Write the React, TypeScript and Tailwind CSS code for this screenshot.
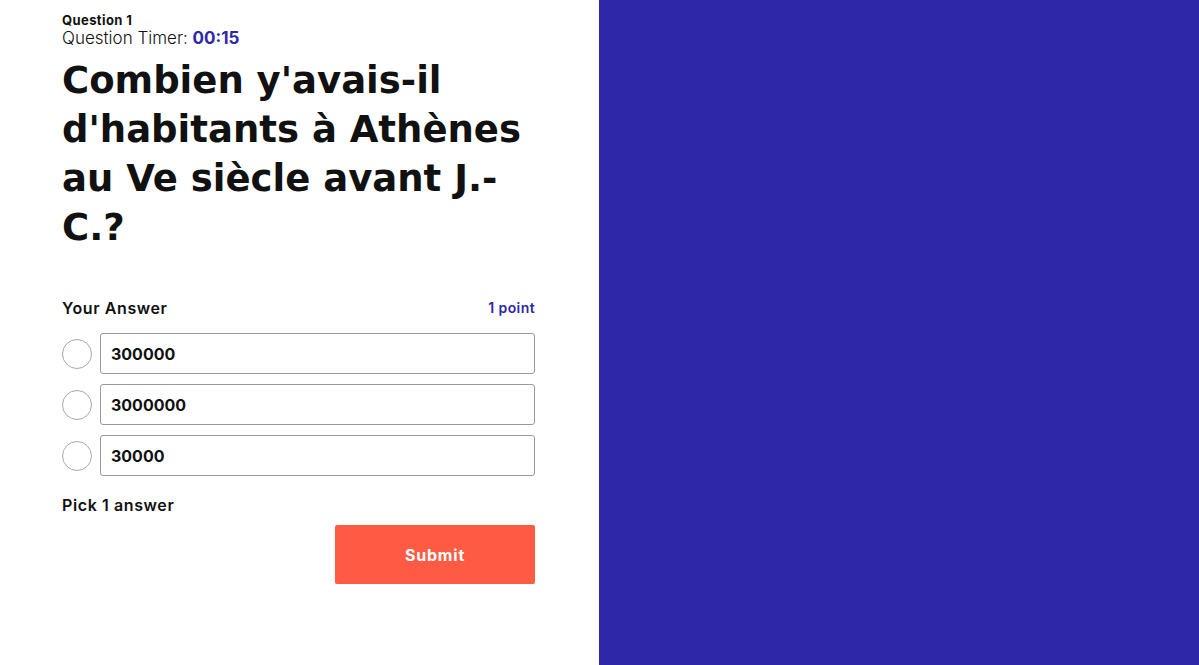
import { useState } from 'react'

const answers = ['300000', '3000000', '30000']

export default function App() {
  const [picked, setPicked] = useState<number | null>(null)

  return (
    <div className="flex h-[665px] w-full font-['Inter',sans-serif] text-[#111]">
      {/* Question panel */}
      <div className="w-[599px] shrink-0 bg-white pl-[62px] pr-[64px] pt-[12px]">
        <p className="text-[13px] font-bold leading-[16px] tracking-[0.4px]">Question 1</p>
        <p className="text-[17px] font-light leading-[20px]">
          Question Timer: <span className="font-bold text-[#2e27a8]">00:15</span>
        </p>

        <h1 className="mt-[8px] font-['DejaVu_Sans',sans-serif] text-[37px] font-bold leading-[49px]">
          Combien y'avais-il d'habitants à Athènes au Ve siècle avant J.-C.?
        </h1>

        <div className="mt-[45px] flex items-center justify-between">
          <span className="text-[16px] font-semibold leading-[20px] tracking-[0.6px]">Your Answer</span>
          <span className="text-[14px] font-semibold tracking-[0.4px] text-[#2e27a8]">1 point</span>
        </div>

        <div className="mt-[15px] flex flex-col gap-[10px]">
          {answers.map((a, i) => (
            <div key={a} className="flex items-center gap-[8px]">
              <button
                type="button"
                onClick={() => setPicked(i)}
                className={`h-[30px] w-[30px] shrink-0 rounded-full border border-[#a8a8a8] ${
                  picked === i ? 'bg-[#2e27a8]' : 'bg-white'
                }`}
              />
              <div className="flex h-[41px] flex-1 items-center rounded-[3px] border border-[#999] px-[10px] text-[16px] font-bold">
                {a}
              </div>
            </div>
          ))}
        </div>

        <p className="mt-[19px] text-[16px] font-semibold leading-[20px] tracking-[0.6px]">Pick 1 answer</p>

        <div className="mt-[10px] flex justify-end">
          <button
            type="button"
            className="h-[59px] w-[200px] rounded-[2px] bg-[#ff5a43] text-[16px] font-bold tracking-[0.8px] text-white"
          >
            Submit
          </button>
        </div>
      </div>

      {/* Right side */}
      <div className="flex-1 bg-[#2e27a8]" />
    </div>
  )
}
